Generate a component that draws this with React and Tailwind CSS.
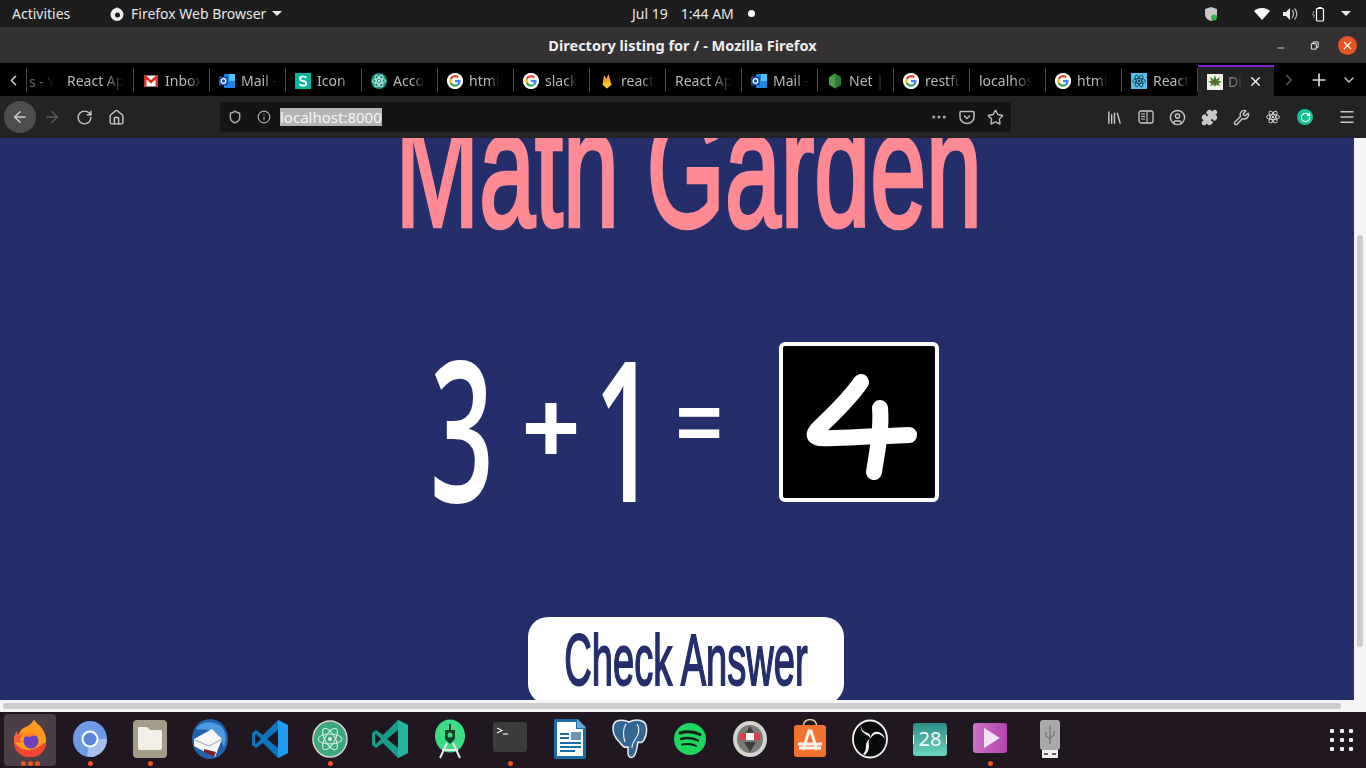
import React from "react";
import { ArrowLeft, ArrowRight, RotateCw, Home, Shield, Info, MoreHorizontal, Star, Library, CircleUser, Puzzle, Wrench, Menu, Plus, X, ChevronDown, ChevronRight, ChevronLeft, Minus } from "lucide-react";

const G = () => (
  <svg viewBox="0 0 48 48" className="w-4 h-4 rounded-full bg-white">
    <circle cx="24" cy="24" r="24" fill="#fff" />
    <path fill="#EA4335" d="M24 13c3 0 5.400 1 7.300 2.800l4.600-4.600C33 8.600 28.900 7 24 7 17.300 7 11.600 10.800 8.800 16.400l5.400 4.200C15.500 16.200 19.400 13 24 13z" />
    <path fill="#4285F4" d="M40.700 24.400c0-1.200-.1-2.300-.3-3.400H24v6.500h9.400c-.4 2.100-1.600 3.900-3.400 5.100l5.300 4.100c3.100-2.900 5.400-7.100 5.400-12.300z" />
    <path fill="#FBBC05" d="M14.200 27.400c-.4-1.100-.6-2.200-.6-3.400s.2-2.300.6-3.400l-5.400-4.200C7.700 18.700 7 21.300 7 24s.7 5.300 1.800 7.600l5.400-4.200z" />
    <path fill="#34A853" d="M24 41c4.600 0 8.500-1.500 11.300-4.100L30 32.800c-1.500 1-3.500 1.600-6 1.600-4.600 0-8.500-3.100-9.800-7.300l-5.400 4.200C11.600 37.200 17.300 41 24 41z" />
  </svg>
);
const Gmail = () => (
  <svg viewBox="0 0 16 16" className="w-4 h-4">
    <rect x="1" y="2.500" width="14" height="11" fill="#fff" />
    <path d="M1 2.500h2L8 7l5-4.500h2v11h-2.500V6.500L8 10.500 3.500 6.500v7H1z" fill="#D93025" />
  </svg>
);
const Outlook = () => (
  <svg viewBox="0 0 16 16" className="w-4 h-4">
    <rect x="5" y="1" width="11" height="14" rx="1" fill="#1E88E5" />
    <rect x="10" y="1" width="6" height="7" fill="#4FC3F7" />
    <rect x="0" y="3.500" width="9" height="9" rx="1" fill="#1A4FB0" />
    <circle cx="4.500" cy="8" r="2.300" fill="none" stroke="#fff" strokeWidth="1.300" />
  </svg>
);
const S = () => (
  <svg viewBox="0 0 16 16" className="w-4 h-4">
    <rect width="16" height="16" fill="#00B8A0" />
    <path d="M11.300 4.700C10.500 3.800 9.300 3.500 8 3.500c-1.800 0-3 .9-3 2.200 0 3 6.300 1.600 6.300 4.700 0 1.300-1.300 2.200-3.200 2.200-1.500 0-2.700-.5-3.500-1.500" fill="none" stroke="#fff" strokeWidth="1.900" />
  </svg>
);
const Atom = ({ c = "#1E8F7E", bg = "none", s = "#BFE9DF", w = "w-4 h-4" }) => (
  <svg viewBox="0 0 16 16" className={w}>
    <circle cx="8" cy="8" r="8" fill={c === "none" ? bg : c} />
    <g fill="none" stroke={s} strokeWidth=".9">
      <ellipse cx="8" cy="8" rx="6.500" ry="2.500" />
      <ellipse cx="8" cy="8" rx="6.500" ry="2.500" transform="rotate(60 8 8)" />
      <ellipse cx="8" cy="8" rx="6.500" ry="2.500" transform="rotate(120 8 8)" />
    </g>
    <circle cx="8" cy="8" r="1.200" fill={s} />
  </svg>
);
const Fire = () => (
  <svg viewBox="0 0 16 16" className="w-4 h-4">
    <path d="M3.500 11.500 5 2l2.500 4L9.500 1l3 10.500L8 15.500z" fill="#F4A623" />
    <path d="M3.500 11.500L9 8l3.500 3.500L8 15.500z" fill="#FFCA28" />
  </svg>
);
const Node = () => (
  <svg viewBox="0 0 16 16" className="w-4 h-4">
    <path d="M8 .500l6 3.700v7.600L8 15.500l-6-3.700V4.200z" fill="#43A047" />
    <path d="M8 .500l6 3.700v7.600L8 15.500z" fill="#2E7D32" />
  </svg>
);
const ReactFav = () => (
  <svg viewBox="0 0 16 16" className="w-4 h-4">
    <rect width="16" height="16" fill="#4FC3E8" />
    <g fill="none" stroke="#17324D" strokeWidth=".8">
      <ellipse cx="8" cy="8" rx="6.500" ry="2.500" />
      <ellipse cx="8" cy="8" rx="6.500" ry="2.500" transform="rotate(60 8 8)" />
      <ellipse cx="8" cy="8" rx="6.500" ry="2.500" transform="rotate(120 8 8)" />
    </g>
    <circle cx="8" cy="8" r="1.200" fill="#17324D" />
  </svg>
);
const Leaf = () => (
  <svg viewBox="0 0 16 16" className="w-4 h-4">
    <rect width="16" height="16" fill="#F4F1E6" />
    <path d="M8 1l1.400 4.500L13 3l-1.500 4L15 7.500l-3.500 2L13 12l-4-1.200L8 13l-1-2.200L3 12l1.500-2.500L1 7.500 4.500 7 3 3l3.600 2.500z" fill="#3E7D32" />
    <circle cx="8" cy="8" r="1.500" fill="#A33A2A" />
  </svg>
);

const tabs = [
  ["React Ap", null],
  ["Inbox", <Gmail />],
  ["Mail -", <Outlook />],
  ["Icon |", <S />],
  ["Acco", <Atom />],
  ["html", <G />],
  ["slack", <G />],
  ["react", <Fire />],
  ["React Ap", null],
  ["Mail -", <Outlook />],
  ["Net |", <Node />],
  ["restfu", <G />],
  ["localhos", null],
  ["html", <G />],
  ["React", <ReactFav />],
];

function Tab({ label, icon }) {
  return (
    <div className="w-[76px] h-[24px] shrink-0 flex items-center gap-[6px] pl-[9px] pr-[8px] border-r border-[#4a4a4a] pt-[2px]">
      {icon && <span className="shrink-0 w-4 h-4 flex">{icon}</span>}
      <span className="overflow-hidden whitespace-nowrap text-[14px] leading-[18px] text-[#b8b8b8] [mask-image:linear-gradient(to_right,#000_65%,transparent)]">{label}</span>
    </div>
  );
}

const Dot = () => <span className="w-[5px] h-[5px] rounded-full bg-[#E9541F]" />;

function DockItem({ children, dots = 0, active = false }) {
  return (
    <div className="relative w-[60px] h-[56px] shrink-0 flex items-center justify-center">
      {active && <div className="absolute left-[4px] right-[4px] top-[2px] bottom-[2px] bg-[#4A3F47] rounded-[4px]" />}
      <div className="relative w-[40px] h-[40px] flex items-center justify-center -mt-[2px]">{children}</div>
      {dots > 0 && (
        <div className="absolute bottom-[2px] left-0 right-0 flex justify-center gap-[2px]">
          {Array.from({ length: dots }).map((_, i) => <Dot key={i} />)}
        </div>
      )}
    </div>
  );
}

const ic = "w-[36px] h-[40px]";
const Firefox = () => (
  <svg viewBox="0 0 36 40" className={ic}>
    <path d="M18 38C8 38 2 31 2 22c0-4 1.500-8 3-10 0 2 .5 3.500 1.500 4.500C8 11 12 8 16 7c3-2 5-4 6-7 1 4 6 5 9 11 3 5 3 9 3 12 0 9-7 15-16 15z" fill="#FF9A1F" />
    <path d="M18 38C8 38 2 31 2 22c3 5 7 9 14 9 7 0 12-4 18-8 0 9-7 15-16 15z" fill="#F0452E" />
    <path d="M2 22c0-4 1.500-8 3-10 0 2 .5 3.500 1.500 4.500L12 13c-2 3 -5 6 -3 11-3 0-5-1-7-2z" fill="#FF5A36" />
    <circle cx="19" cy="22" r="7.500" fill="#6B3FBF" />
    <path d="M11 17c4-5 12-4 15 1-4-2-6-1-8 0-2 0-4-1-7-1z" fill="#FF7B2E" />
  </svg>
);
const Chromium = () => (
  <svg viewBox="0 0 36 40" className={ic}>
    <ellipse cx="18" cy="20" rx="17" ry="18" fill="#6E9BE8" />
    <path d="M18 20l17 0c0 10-8 18-17 18l-3-1z" fill="#A8C0EE" />
    <circle cx="18" cy="20" r="7.500" fill="#5A86DE" stroke="#fff" strokeWidth="2" />
  </svg>
);
const Files = () => (
  <svg viewBox="0 0 36 40" className={ic}>
    <rect x="1" y="1" width="34" height="38" rx="4" fill="#A59C87" />
    <path d="M6 9a1 1 0 0 1 1-1h8l3 3h11a1 1 0 0 1 1 1v17a2 2 0 0 1-2 2H8a2 2 0 0 1-2-2z" fill="#F2EFE6" />
  </svg>
);
const Thunderbird = () => (
  <svg viewBox="0 0 36 40" className={ic}>
    <ellipse cx="18" cy="20" rx="18" ry="20" fill="#1F62AE" />
    <path d="M4 10C8 3 20 0 30 8c4 5 5 14 2 20-3-8-8-14-16-17-5-1-8 0-12-1z" fill="#4C9BE0" />
    <path d="M2 20l18-10 10 10-7 18-10-5-11-6z" fill="#F6F6F6" />
    <path d="M3 21l14 6 13-7" fill="none" stroke="#A9B4C4" strokeWidth="1.200" />
    <path d="M12 33l10 5 2-5-12-3z" fill="#7C1F2A" />
  </svg>
);
const VSCode = ({ c1 = "#0A76BD", c2 = "#1F9CF0" }) => (
  <svg viewBox="0 0 36 40" className={ic}>
    <path d="M26 1l10 5v28l-10 5-15-15L4 29l-4-3v-12l4-3 7 5z" fill={c1} />
    <path d="M26 1l10 5v28l-10 5z" fill={c2} />
    <path d="M26 11L15 20l11 9z" fill="#211720" />
    <path d="M4 15l-1 1v8l1 1 5-5z" fill="#211720" />
  </svg>
);
const AtomDock = () => (
  <svg viewBox="0 0 36 40" className={ic}>
    <ellipse cx="18" cy="20" rx="17" ry="18" fill="#3FA77F" stroke="#D8D8D0" strokeWidth="1.500" />
    <g fill="none" stroke="#DDF3E8" strokeWidth="1">
      <ellipse cx="18" cy="20" rx="12" ry="5" />
      <ellipse cx="18" cy="20" rx="12" ry="5" transform="rotate(60 18 20)" />
      <ellipse cx="18" cy="20" rx="12" ry="5" transform="rotate(120 18 20)" />
    </g>
    <circle cx="18" cy="20" r="2" fill="#DDF3E8" />
  </svg>
);
const Android = () => (
  <svg viewBox="0 0 36 40" className={ic}>
    <ellipse cx="18" cy="17" rx="15" ry="16.500" fill="#3DDC84" />
    <path d="M18 5v6" stroke="#173F2D" strokeWidth="2" />
    <path d="M13 11h10v9l-5 5-5-5z" fill="#173F2D" />
    <circle cx="18" cy="16" r="2.500" fill="#3DDC84" />
    <path d="M15 24L8 39M21 24l7 15M10 31h16" stroke="#E6E8E6" strokeWidth="2" fill="none" />
  </svg>
);
const Terminal = () => (
  <svg viewBox="0 0 36 40" className={ic}>
    <rect x="1" y="3" width="34" height="30" rx="3" fill="#3C3C3C" />
    <path d="M5 9l5 2.500L5 14" fill="none" stroke="#eee" strokeWidth="1.200" />
    <path d="M11 15h5" stroke="#eee" strokeWidth="1.200" />
  </svg>
);
const Writer = () => (
  <svg viewBox="0 0 36 40" className={ic}>
    <path d="M4 0h22l8 8v30a2 2 0 0 1-2 2H4a2 2 0 0 1-2-2V2a2 2 0 0 1 2-2z" fill="#1B6FA8" />
    <path d="M5 3h19v7h7v27H5z" fill="#fff" />
    <path d="M25 0l9 9h-9z" fill="#63A8D6" />
    <rect x="8" y="14" width="9" height="2" fill="#1B6FA8" />
    <rect x="8" y="18" width="9" height="2" fill="#1B6FA8" />
    <rect x="19" y="13" width="10" height="8" fill="#6A93B8" />
    <rect x="8" y="23" width="21" height="2" fill="#1B6FA8" />
    <rect x="8" y="27" width="21" height="2" fill="#1B6FA8" />
    <rect x="8" y="31" width="15" height="2" fill="#1B6FA8" />
  </svg>
);
const Postgres = () => (
  <svg viewBox="0 0 36 40" className={ic}>
    <path d="M5 2c5-2 9 0 12 1 4-2 10-3 15 0 4 4 3 13 0 18-2 3-4 3-6 2-1 4-1 10-4 14-3 3-6 1-6-3l0-6c-3 1-5 0-7-3C6 21 1 18 1 10c0-4 1-7 4-8z" fill="#336791" stroke="#E8EDF2" strokeWidth="1.500" />
    <path d="M14 5c-3 5-3 12-1 18M25 5c3 4 2 10-1 14-2 3-4 6-4 10" fill="none" stroke="#E8EDF2" strokeWidth="1.200" />
  </svg>
);
const Spotify = () => (
  <svg viewBox="0 0 36 40" className={ic}>
    <circle cx="18" cy="20" r="16" fill="#1ED760" />
    <g fill="none" stroke="#1A1A1A" strokeLinecap="round">
      <path d="M8 14c7-2 14-1.500 20 1.500" strokeWidth="3" />
      <path d="M9 20c6-1.500 12-1 17 1.500" strokeWidth="2.500" />
      <path d="M10 25.500c5-1 10-.7 14 1.300" strokeWidth="2" />
    </g>
  </svg>
);
const Compass = () => (
  <svg viewBox="0 0 36 40" className={ic}>
    <ellipse cx="18" cy="20" rx="17" ry="18" fill="#D2D2CE" />
    <ellipse cx="18" cy="20" rx="13" ry="14" fill="#7B7B78" />
    <path d="M18 7l6 10H12zM18 33l-6-10h12z" fill="#3F3F3D" />
    <rect x="8" y="14" width="20" height="7" rx="1" fill="#E8394A" />
    <rect x="14" y="14" width="8" height="7" fill="#fff" />
  </svg>
);
const Store = () => (
  <svg viewBox="0 0 36 40" className={ic}>
    <path d="M11 8c0-10 14-10 14 0" fill="none" stroke="#E9C9A5" strokeWidth="1.500" />
    <rect x="2" y="6" width="32" height="32" rx="3" fill="#F4702F" />
    <path d="M11 31L17 12h2l6 19M6 25h24M7 29h22" fill="none" stroke="#F8F3EE" strokeWidth="3" />
  </svg>
);
const OBS = () => (
  <svg viewBox="0 0 36 40" className={ic}>
    <ellipse cx="18" cy="20" rx="17" ry="18.500" fill="#0A0A0A" stroke="#F4F4F4" strokeWidth="1.800" />
    <g fill="#F4F4F4">
      <path d="M9 6c-1 5 2 8 6 10 2 1 3 2 3 4 1-3 0-5-2-6-4-1-7-3-7-8z" />
      <path d="M33 20c-1-5-6-8-10-7-3 .7-4 3-5 7 2-3 4-5 7-5 3 0 6 2 8 5z" />
      <path d="M13 36c3-3 4-6 4-9 0-3-1-5 1-7-3 1-4 4-4 7 0 4-1 6-3 8z" />
    </g>
  </svg>
);
const Calendar = () => (
  <div className="relative w-[34px] h-[33px] rounded-[3px] bg-gradient-to-b from-[#2E8E8A] to-[#6AD6BF] flex items-center justify-center">
    <span className="absolute left-0 top-[12px] w-px h-[9px] bg-white" />
    <span className="absolute right-0 top-[12px] w-px h-[9px] bg-white" />
    <span className="text-[20px] leading-none text-[#F2F8F8] [font-family:'Noto_Sans',sans-serif]">28</span>
  </div>
);
const Video = () => (
  <svg viewBox="0 0 36 40" className={ic}>
    <defs>
      <linearGradient id="vid" x1="0" y1="0" x2="1" y2="0"><stop offset="0" stopColor="#CB72C6" /><stop offset="1" stopColor="#B443AE" /></linearGradient>
    </defs>
    <rect x="1" y="4" width="34" height="30" rx="3" fill="url(#vid)" />
    <path d="M12 9v20l16-10z" fill="#F4E3F4" />
  </svg>
);
const Usb = () => (
  <svg viewBox="0 0 36 40" className={ic}>
    <rect x="8" y="1" width="20" height="30" rx="3" fill="#A9A9A9" />
    <rect x="10" y="31" width="16" height="8" fill="#EFEFEF" />
    <rect x="12" y="34" width="4" height="2" fill="#666" />
    <rect x="20" y="34" width="4" height="2" fill="#666" />
    <path d="M18 7v18M14 13v4l4 3M22 12v4l-4 3" fill="none" stroke="#7A7A7A" strokeWidth="1.500" />
  </svg>
);

const Four = () => (
  <svg viewBox="0 0 152 152" className="w-full h-full">
    <g fill="none" stroke="#fff" strokeWidth="16" strokeLinecap="round" strokeLinejoin="round">
      <path d="M78 36C66 54 48 70 34 84c-4 5-3 7 3 8 22 1 46-2 68-2l21-1" />
      <path d="M97 62c2 22-3 44-6 64" />
    </g>
  </svg>
);

const hand = "[font-family:'Liberation_Sans_Narrow','Liberation_Sans',sans-serif]";
const digit = "[font-family:'Open_Sans',sans-serif]";
const Slot = ({ children, w = "w-8" }) => <div className={`${w} h-8 flex items-center justify-center shrink-0`}>{children}</div>;

export default function App() {
  const navIcon = "w-[17px] h-[17px] text-[#c8c8c8]";
  return (
    <div className="w-[1366px] h-[768px] overflow-hidden flex flex-col bg-black [font-family:'Noto_Sans',sans-serif]">
      {/* GNOME top bar */}
      <div className="h-[27px] bg-[#1D1D1D] flex items-center relative text-[14px] text-[#E8E8E8] shrink-0">
        <span className="ml-3 w-[97px]">Activities</span>
        <svg viewBox="0 0 16 16" className="w-[16px] h-[16px] mr-[6px]">
          <circle cx="8" cy="8.500" r="6.500" fill="#eee" />
          <circle cx="8.500" cy="9" r="2.500" fill="#1D1D1D" />
          <path d="M8 1l3 3H6z" fill="#eee" />
        </svg>
        <span>Firefox Web Browser</span>
        <span className="ml-[6px] w-0 h-0 border-x-[5px] border-x-transparent border-t-[5px] border-t-[#E8E8E8]" />
        <div className="absolute left-[632px] top-0 h-[27px] flex items-center">
          <span>Jul 19</span>
          <span className="ml-[13px]">1:44 AM</span>
          <span className="ml-[14px] w-[7px] h-[7px] rounded-full bg-white" />
        </div>
        <div className="ml-auto flex items-center h-full">
          <svg viewBox="0 0 16 16" className="w-[16px] h-[16px] mr-[35px]">
            <path d="M8 1l6 2v5c0 4-3 6-6 7-3-1-6-3-6-7V3z" fill="#C8C8C8" />
            <circle cx="11" cy="11.500" r="3" fill="#2DB84D" />
          </svg>
          <svg viewBox="0 0 16 16" className="w-[16px] h-[16px] mr-[12px]"><path d="M0 5c4-4 12-4 16 0l-8 9z" fill="#fff" /></svg>
          <svg viewBox="0 0 16 16" className="w-[16px] h-[16px] mr-[13px]">
            <path d="M1 6h3l4-4v12l-4-4H1z" fill="#eee" />
            <path d="M10 4c2 2 2 6 0 8M12.500 2.500c3 3 3 8 0 11" fill="none" stroke="#bbb" strokeWidth="1.200" />
          </svg>
          <svg viewBox="0 0 16 16" className="w-[16px] h-[16px] mr-[14px]">
            <path d="M3 5L1.500 9h2L2.500 12" fill="none" stroke="#888" strokeWidth="1" />
            <rect x="5.500" y="2.500" width="7" height="12.500" rx="1" fill="none" stroke="#fff" strokeWidth="1.200" />
            <rect x="7" y="1" width="4" height="1.500" fill="#fff" />
          </svg>
          <span className="mr-[15px] w-0 h-0 border-x-[5px] border-x-transparent border-t-[5px] border-t-[#E8E8E8]" />
        </div>
      </div>

      {/* Window title bar */}
      <div className="h-[36px] bg-[#333132] flex items-center relative shrink-0">
        <span className="w-full text-center text-[14.500px] font-bold text-[#EEEEEE] pr-[1px] pt-[1px]">Directory listing for / - Mozilla Firefox</span>
        <div className="absolute right-[9px] top-0 h-full flex items-center">
          <Minus className="w-[10px] h-[10px] text-white mr-[24px] mt-[6px]" strokeWidth={2} />
          <svg viewBox="0 0 10 10" className="w-[9px] h-[9px] mr-[19px]"><path d="M1.500 3h5.500v6H1.500zM3.500 3V1H9v6H7" fill="none" stroke="#fff" strokeWidth="1" /></svg>
          <div className="w-[19px] h-[19px] rounded-full bg-[#E95420] flex items-center justify-center"><X className="w-[13px] h-[13px] text-white" strokeWidth={2} /></div>
        </div>
      </div>
      <div className="h-px bg-black shrink-0" />

      {/* Tab strip */}
      <div className="h-[32px] bg-black flex items-center shrink-0 relative">
        <div className="w-[27px] h-[24px] flex items-center justify-center border-r border-[#4a4a4a] shrink-0"><ChevronLeft className="w-[17px] h-[17px] text-[#ddd]" strokeWidth={2} /></div>
        <div className="w-[31px] h-[24px] shrink-0 flex items-center border-r border-[#4a4a4a] overflow-hidden text-[14px] text-[#666] whitespace-nowrap pl-[2px] pt-[2px] [mask-image:linear-gradient(to_right,#000_50%,transparent_90%)]">s - Y</div>
        {tabs.map(([label, icon], i) => <Tab key={i} label={label} icon={icon} />)}
        <div className="w-[76px] h-[31px] mt-[1px] shrink-0 bg-[#232323] border-t-[2px] border-[#8420D0] flex items-center pl-[9px] gap-[5px]">
          <span className="shrink-0 w-4 h-4 flex"><Leaf /></span>
          <span className="w-[15px] overflow-hidden whitespace-nowrap text-[14px] text-[#888] [mask-image:linear-gradient(to_right,#000_40%,transparent)]">Dir</span>
          <X className="w-[15px] h-[15px] text-white" strokeWidth={2} />
        </div>
        <ChevronRight className="ml-[6px] w-[18px] h-[18px] text-[#555]" strokeWidth={2} />
        <Plus className="ml-[11px] w-[20px] h-[20px] text-[#ddd]" strokeWidth={2} />
        <ChevronDown className="ml-[12px] w-[16px] h-[16px] text-[#ccc]" strokeWidth={2} />
      </div>

      {/* Nav bar */}
      <div className="h-[42px] bg-[#232323] flex items-center shrink-0 pl-[4px]">
        <div className="w-8 h-8 rounded-full bg-[#4E4E4E] flex items-center justify-center shrink-0"><ArrowLeft className="w-[18px] h-[18px] text-[#ccc]" /></div>
        <Slot><ArrowRight className="w-[18px] h-[18px] text-[#5e5e5e]" /></Slot>
        <Slot><RotateCw className={navIcon} /></Slot>
        <Slot><Home className={navIcon} /></Slot>
        <div className="ml-[88px] w-[791px] h-[30px] bg-[#141414] rounded-[4px] flex items-center shrink-0">
          <Shield className="ml-[8px] w-[14px] h-[14px] text-[#aaa]" strokeWidth={2.500} />
          <Info className="ml-[15px] w-[14px] h-[14px] text-[#aaa]" />
          <span className="ml-[9px] w-[102px] text-[15px] leading-[18px] bg-[#B4B4B4] text-[#F4F4F4] whitespace-nowrap overflow-hidden">localhost:8000</span>
          <MoreHorizontal className="ml-auto w-[18px] h-[18px] text-[#aaa]" />
          <svg viewBox="0 0 16 16" className="ml-[11px] w-[16px] h-[16px]"><path d="M2 2.500h12a1 1 0 0 1 1 1V8a7 6.500 0 0 1-14 0V3.500a1 1 0 0 1 1-1zM5 6.500l3 3 3-3" fill="none" stroke="#bbb" strokeWidth="1.500" /></svg>
          <Star className="ml-[12px] mr-[7px] w-[17px] h-[17px] text-[#bbb]" />
        </div>
        <div className="ml-[87px] flex items-center">
          <Slot><Library className={navIcon} /></Slot>
          <Slot w="w-[31px]">
            <svg viewBox="0 0 16 16" className="w-[16px] h-[16px]">
              <rect x="1" y="2" width="14" height="12" rx="2" fill="none" stroke="#c8c8c8" strokeWidth="1.300" />
              <path d="M9 2v12M3 5h4M3 7.500h4M3 10h4" fill="none" stroke="#c8c8c8" strokeWidth="1.100" />
            </svg>
          </Slot>
          <Slot><CircleUser className={navIcon} /></Slot>
          <Slot><Puzzle className="w-[17px] h-[17px] text-[#c8c8c8] fill-[#c8c8c8]" /></Slot>
          <Slot><Wrench className={navIcon} /></Slot>
          <Slot><Atom c="none" bg="#232323" s="#ddd" /></Slot>
          <Slot>
            <div className="w-4 h-4 rounded-full bg-[#15C39A] flex items-center justify-center"><RotateCw className="w-[11px] h-[11px] text-white" strokeWidth={2.500} /></div>
          </Slot>
          <Menu className="ml-[17px] w-[18px] h-[18px] text-[#c8c8c8]" />
        </div>
      </div>

      {/* Page area */}
      <div className="h-[562px] flex shrink-0">
        <div className="w-[1354px] h-full bg-[#242E6B] overflow-hidden">
          <div className="w-[1371px] flex flex-col items-center">
            <h1 className={`${hand} -mt-[46px] ml-[6px] h-[140px] font-normal text-[150px] leading-[140px] text-[#FF8A94] whitespace-nowrap origin-top scale-x-[.67] scale-y-[1.1] [-webkit-text-stroke:4px_#FF8A94]`}>Math Garden</h1>
            <div className="mt-[110px] flex items-center h-[160px] text-white">
              <span className={`${digit} w-[60px] flex justify-center text-[196px] leading-[160px] font-semibold scale-x-[.57] pt-[8px]`}>3</span>
              <span className={`${hand} ml-[34px] w-[50px] flex justify-center text-[100px] leading-[160px] font-bold pt-[10px]`}>+</span>
              <span className={`${digit} ml-[38px] w-[22px] flex justify-center text-[196px] leading-[160px] font-semibold scale-x-[.55] pt-[8px]`}>1</span>
              <span className={`${hand} ml-[42px] w-[42px] flex justify-center text-[80px] leading-[160px] font-bold`}>=</span>
              <div className="ml-[59px] w-[160px] h-[160px] bg-black border-4 border-white rounded-[6px] overflow-hidden"><Four /></div>
            </div>
            <button className={`${hand} mt-[115px] w-[316px] h-[87px] bg-white rounded-[20px] text-[#242E6B] flex justify-center items-center`}>
              <span className="font-normal text-[56px] leading-[74px] whitespace-nowrap scale-x-[.68] scale-y-[1.28] [-webkit-text-stroke:1.500px_#242E6B]">Check Answer</span>
            </button>
          </div>
        </div>
        <div className="w-[12px] h-full bg-[#F5F5F5] flex justify-center shrink-0">
          <div className="w-[6px] h-[412px] mt-[97px] rounded-[3px] bg-[#CDCDCD]" />
        </div>
      </div>

      {/* Horizontal scrollbar */}
      <div className="h-[12px] bg-[#F5F5F5] flex items-center shrink-0">
        <div className="ml-[3px] w-[1338px] h-[6px] rounded-[3px] bg-[#CDCDCD]" />
      </div>

      {/* Dock */}
      <div className="h-[56px] bg-[#211720] flex items-center shrink-0 pr-[4px]">
        <DockItem active dots={3}><Firefox /></DockItem>
        <DockItem dots={1}><Chromium /></DockItem>
        <DockItem dots={1}><Files /></DockItem>
        <DockItem><Thunderbird /></DockItem>
        <DockItem><VSCode /></DockItem>
        <DockItem dots={1}><AtomDock /></DockItem>
        <DockItem><VSCode c1="#1A9C8C" c2="#23B5A0" /></DockItem>
        <DockItem><Android /></DockItem>
        <DockItem dots={1}><Terminal /></DockItem>
        <DockItem><Writer /></DockItem>
        <DockItem><Postgres /></DockItem>
        <DockItem><Spotify /></DockItem>
        <DockItem><Compass /></DockItem>
        <DockItem><Store /></DockItem>
        <DockItem><OBS /></DockItem>
        <DockItem><Calendar /></DockItem>
        <DockItem dots={1}><Video /></DockItem>
        <DockItem><Usb /></DockItem>
        <div className="ml-auto mr-[8px] w-[24px] grid grid-cols-3 gap-[5px]">
          {Array.from({ length: 9 }).map((_, i) => <span key={i} className="w-[4px] h-[4px] rounded-[1px] bg-[#EEE]" />)}
        </div>
      </div>
    </div>
  );
}
